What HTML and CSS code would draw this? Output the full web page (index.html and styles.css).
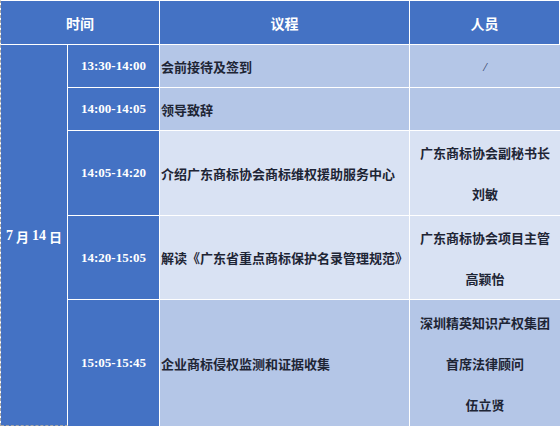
FILE: index.html
```html
<!DOCTYPE html>
<html lang="zh">
<head>
<meta charset="utf-8">
<title>议程</title>
<link rel="stylesheet" href="styles.css">
</head>
<body>
<div class="agenda">
  <div class="cell head span2">时间</div>
  <div class="cell head">议程</div>
  <div class="cell head">人员</div>

  <div class="cell date"><span class="num">7</span> 月 <span class="num">14</span> 日</div>

  <div class="cell time">13:30-14:00</div>
  <div class="cell topic dark">会前接待及签到</div>
  <div class="cell people dark"><span class="slash">/</span></div>

  <div class="cell time">14:00-14:05</div>
  <div class="cell topic dark">领导致辞</div>
  <div class="cell people dark"></div>

  <div class="cell time">14:05-14:20</div>
  <div class="cell topic light">介绍广东商标协会商标维权援助服务中心</div>
  <div class="cell people light">广东商标协会副秘书长<br>刘敏</div>

  <div class="cell time">14:20-15:05</div>
  <div class="cell topic light">解读《广东省重点商标保护名录管理规范》</div>
  <div class="cell people light">广东商标协会项目主管<br>高颖怡</div>

  <div class="cell time last">15:05-15:45</div>
  <div class="cell topic dark last">企业商标侵权监测和证据收集</div>
  <div class="cell people dark last">深圳精英知识产权集团<br>首席法律顾问<br>伍立贤</div>
</div>
</body>
</html>
```

FILE: styles.css
```css
* { box-sizing: border-box; }
html, body { margin: 0; padding: 0; background: #ffffff; }
body {
  font-family: "Noto Sans CJK SC", "Noto Sans", sans-serif;
  width: 560px;
  height: 426px;
  overflow: hidden;
}
.agenda {
  display: grid;
  grid-template-columns: 67px 92px 250px 150px;
  grid-template-rows: 44px 43px 43px 85px 84px 126px;
  border-left: 1px dashed #a6a6a6;
  border-top: 1px solid #ffffff;
  width: 560px;
}
.cell {
  border-right: 1px solid #ffffff;
  border-bottom: 1px solid #ffffff;
  display: flex;
  align-items: center;
  font-weight: bold;
  font-size: 13px;
  color: #1e2535;
}
.head {
  background: #4472c4;
  color: #ffffff;
  justify-content: center;
  font-size: 14px;
}
.span2 { grid-column: span 2; }
.date {
  grid-row: 2 / span 5;
  grid-column: 1;
  background: #4472c4;
  color: #ffffff;
  justify-content: center;
  border-bottom: 1px dashed #a6a6a6;
  white-space: pre;
  padding-top: 2px;
}
.num { font-family: "Liberation Serif", serif; font-size: 14px; }
.time {
  grid-column: 2;
  background: #4472c4;
  color: #ffffff;
  justify-content: center;
  font-family: "Liberation Serif", serif;
  font-size: 13px;
}
.topic {
  padding-left: 1px;
  white-space: nowrap;
}
.people {
  justify-content: center;
  text-align: center;
  line-height: 41px;
  white-space: nowrap;
  border-right: none;
}
.dark { background: #b4c6e7; }
.light { background: #d9e2f3; }
.last { border-bottom: none; }
.slash { font-family: "Liberation Serif", serif; font-weight: normal; font-style: italic; color: #2f3b63; }
```
